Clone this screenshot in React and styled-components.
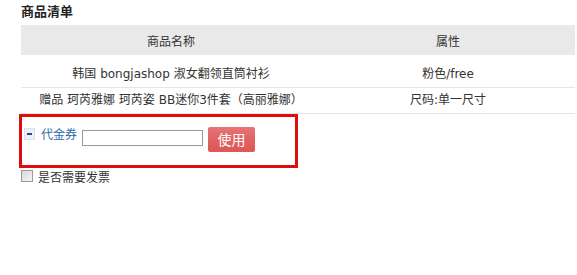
import styled, { createGlobalStyle } from "styled-components";

const GlobalStyle = createGlobalStyle`
  body {
    margin: 0;
    background: #fff;
    font-family: "DejaVu Sans", "Noto Sans CJK SC", sans-serif;
    font-size: 12px;
    color: #333;
  }
`;

const Page = styled.div`
  padding: 4px 2px 0 21px;
`;

const Title = styled.h3`
  margin: 0;
  height: 21px;
  font-size: 13px;
  font-weight: bold;
  line-height: 15px;
  color: #222;
`;

const Table = styled.table`
  width: 554px;
  border-collapse: collapse;
  table-layout: fixed;
`;

const HeadCell = styled.th`
  height: 30px;
  padding: 0;
  background: #e9e9ea;
  font-weight: normal;
  font-size: 12px;
  color: #333;
  text-align: center;
  width: ${(p) => p.$width || "auto"};
`;

const Row = styled.tr`
  border-bottom: 1px solid #e6e6e6;
`;

const Cell = styled.td`
  padding: ${(p) => (p.$first ? "10px 0 5px" : "4px 0 5px")};
  height: ${(p) => (p.$first ? "17px" : "16px")};
  text-align: center;
  vertical-align: bottom;
  line-height: 16px;
`;

const CouponBox = styled.div`
  width: 279px;
  height: 54px;
  margin-left: -2px;
  padding: 10px 0 0 2px;
  box-sizing: border-box;
  border: 3px solid #e00b0b;
  display: flex;
  align-items: flex-start;
`;

const Toggle = styled.span`
  width: 9px;
  height: 10px;
  margin-top: 1px;
  background: #eef0f4;
  border: 1px solid #dde2ea;
  display: flex;
  align-items: center;
  justify-content: center;
  &::after {
    content: "";
    width: 5px;
    height: 2px;
    background: #1f4d87;
  }
`;

const CouponLabel = styled.span`
  margin-left: 6px;
  color: #2a6aa8;
  line-height: 14px;
  font-family: "Noto Sans CJK SC", sans-serif;
`;

const CouponInput = styled.input`
  width: 121px;
  height: 16px;
  margin: 3px 0 0 5px;
  padding: 0;
  border: 1px solid #999;
  box-sizing: border-box;
  outline: none;
`;

const UseButton = styled.button`
  width: 47px;
  height: 25px;
  margin-left: 5px;
  border: 0;
  border-radius: 2px;
  background: linear-gradient(#e87474, #e06060 55%, #dd5858);
  color: #fff;
  font-size: 14px;
  font-family: "Noto Sans CJK SC", sans-serif;
  padding: 0;
  line-height: 25px;
`;

const InvoiceRow = styled.label`
  display: flex;
  align-items: center;
  margin-top: 0;
  height: 16px;
  font-family: "Noto Sans CJK SC", sans-serif;
  color: #333;
`;

const Check = styled.span`
  width: 10px;
  height: 10px;
  margin-right: 5px;
  border: 1px solid #9a9a9a;
  background: linear-gradient(135deg, #d8d8d8, #f4f4f4);
`;

export default function App() {
  return (
    <>
      <GlobalStyle />
      <Page>
        <Title>商品清单</Title>
        <Table>
          <thead>
            <tr>
              <HeadCell $width="300px">商品名称</HeadCell>
              <HeadCell>属性</HeadCell>
            </tr>
          </thead>
          <tbody>
            <Row>
              <Cell $first>韩国 bongjashop 淑女翻领直筒衬衫</Cell>
              <Cell $first>粉色/free</Cell>
            </Row>
            <Row>
              <Cell>赠品 珂芮雅娜 珂芮姿 BB迷你3件套（高丽雅娜）</Cell>
              <Cell>尺码:单一尺寸</Cell>
            </Row>
          </tbody>
        </Table>
        <CouponBox>
          <Toggle />
          <CouponLabel>代金券</CouponLabel>
          <CouponInput type="text" />
          <UseButton>使用</UseButton>
        </CouponBox>
        <InvoiceRow>
          <Check />
          是否需要发票
        </InvoiceRow>
      </Page>
    </>
  );
}
